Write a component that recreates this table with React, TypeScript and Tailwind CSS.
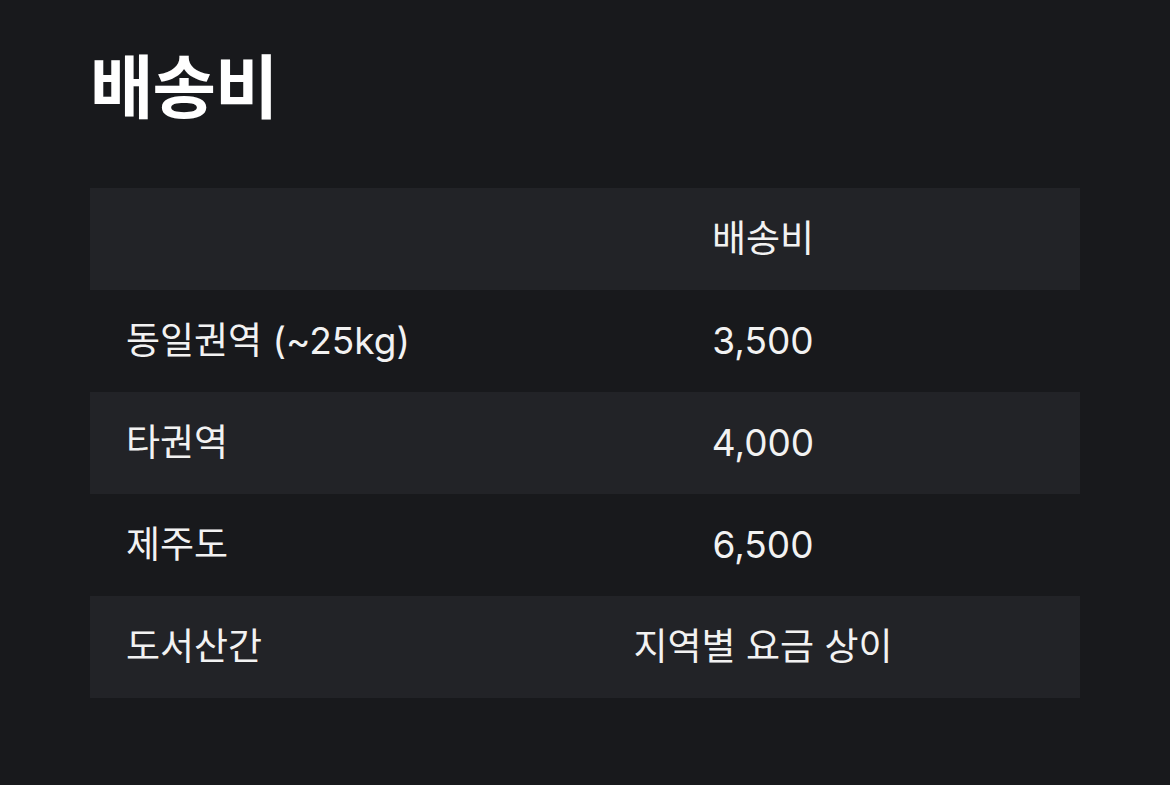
const rows = [
  { area: '동일권역 (~25kg)', fee: '3,500' },
  { area: '타권역', fee: '4,000' },
  { area: '제주도', fee: '6,500' },
  { area: '도서산간', fee: '지역별 요금 상이' },
]

export default function App() {
  return (
    <div
      className="min-h-[785px] bg-[#18191c] px-[90px] pt-[40px] text-white"
      style={{ fontFamily: 'Inter, "Noto Sans CJK KR", sans-serif' }}
    >
      <h1 className="text-[69px] font-semibold leading-[96px] tracking-[-1px]">배송비</h1>

      <div className="mt-[52px] w-[990px] text-[37px] text-[#f2f2f2]">
        <div className="grid h-[102px] grid-cols-[356px_1fr] items-center bg-[#222327]">
          <div />
          <div className="text-center">배송비</div>
        </div>
        {rows.map((r, i) => (
          <div
            key={r.area}
            className={
              'grid h-[102px] grid-cols-[356px_1fr] items-center ' +
              (i % 2 === 1 ? 'bg-[#222327]' : 'bg-[#18191c]')
            }
          >
            <div className="pl-9">{r.area}</div>
            <div className="text-center">{r.fee}</div>
          </div>
        ))}
      </div>
    </div>
  )
}
